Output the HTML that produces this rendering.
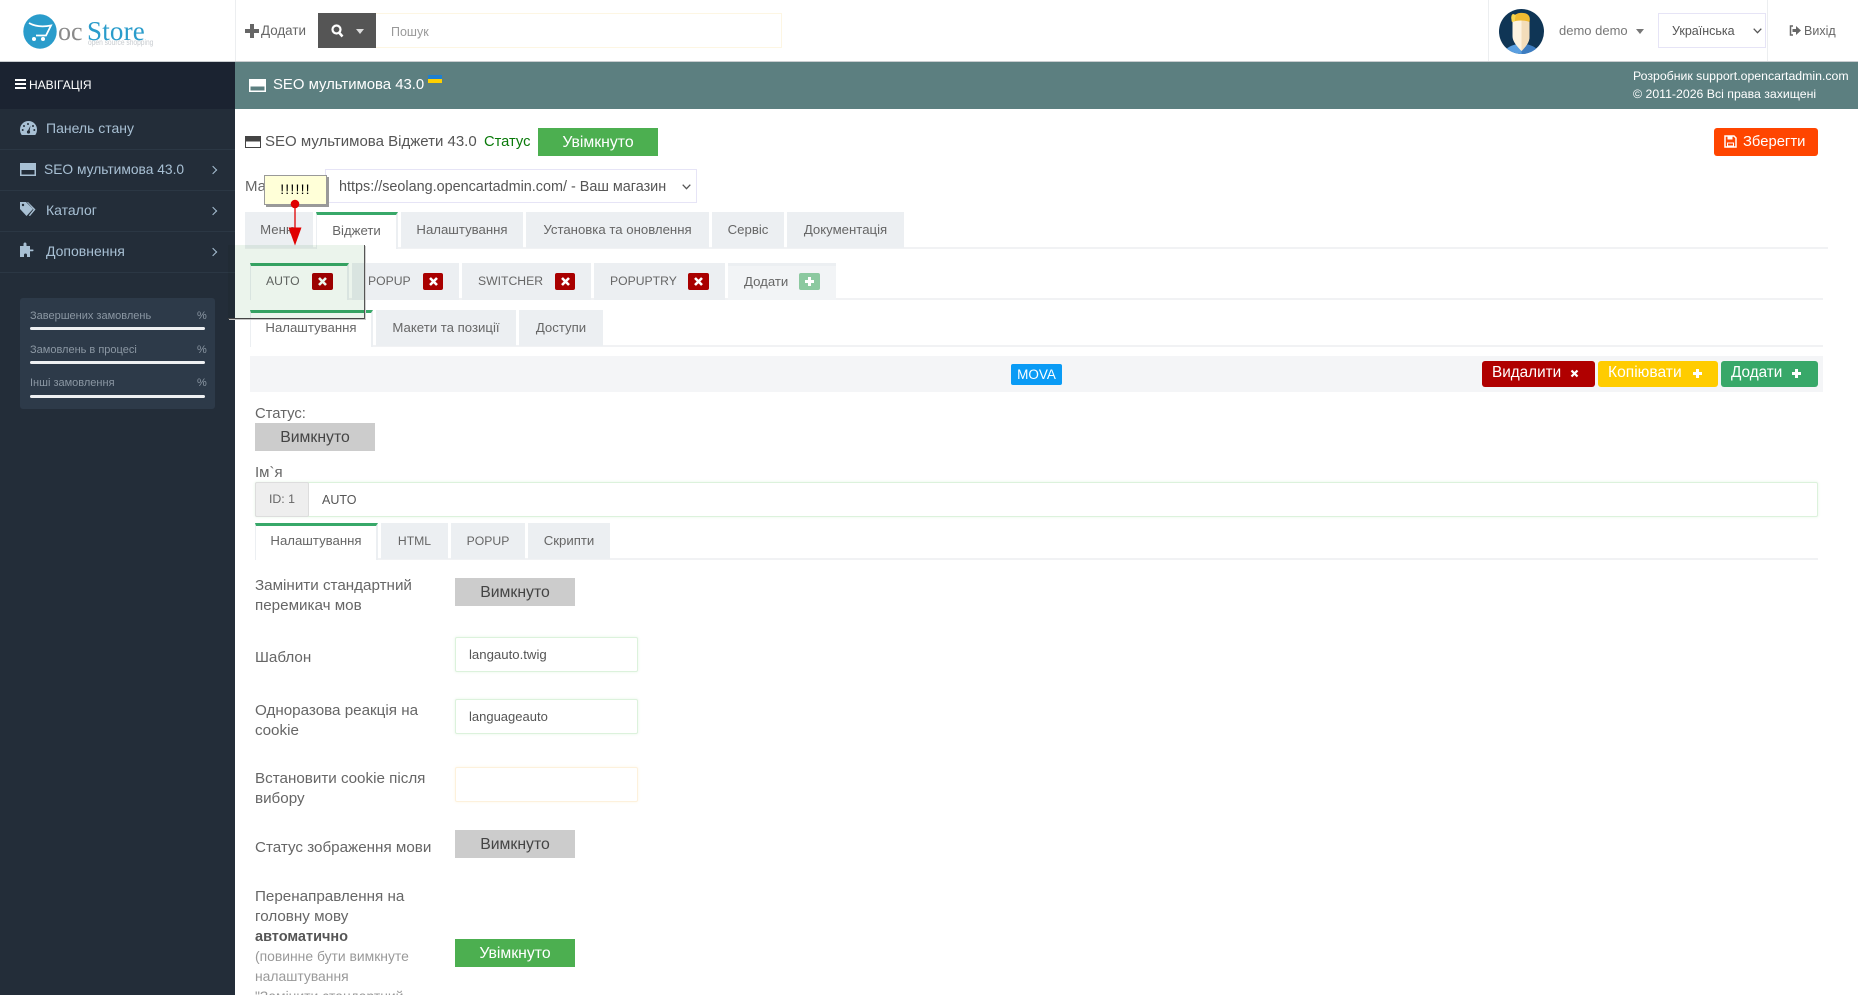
<!DOCTYPE html>
<html lang="uk"><head><meta charset="utf-8"><title>SEO мультимова 43.0</title>
<style>
html,body{margin:0;padding:0;width:1858px;height:995px;overflow:hidden;background:#fff}
body{position:relative;font-family:"Liberation Sans","DejaVu Sans",sans-serif;font-size:13px;color:#666}
.a,.t,svg.i{position:absolute}
.t{white-space:nowrap;line-height:20px;height:20px}
.tab{position:absolute;background:#eceff2;text-align:center;color:#666;white-space:nowrap;font-size:13.2px;line-height:35px;box-sizing:border-box}
.tab.on{background:#fff;border-left:1px solid #eceff2;border-right:2px solid #eceff2;border-top:3px solid #38a869;line-height:30px}
.caps{font-size:12.2px;line-height:36px}
.hl{position:absolute;height:2px;background:#f1f2f4}
.sb{position:absolute;left:0;width:235px;height:1px;background:#2b3744}
.nav{color:#a8c0d4;font-size:14px}
.btn{position:absolute;text-align:center;font-size:15.8px;line-height:29px;height:28px;white-space:nowrap}
.off{background:#ccc;color:#444;width:120px}
.on2{background:#4caf50;color:#fff;width:120px}
.x{position:absolute;width:21px;height:17px;background:#a90000;border-radius:2px}
.r{position:absolute;height:26px;line-height:24px;border-radius:3px;color:#fff;font-size:15.3px;white-space:nowrap}
.inp{position:absolute;box-sizing:border-box;background:#fff;border:1px solid #dcf2dc;box-shadow:0 0 3px #e8f5e8;border-radius:2px;line-height:34px;color:#555;font-size:13.2px;padding-left:13px}
.lb{position:absolute;left:255px;width:190px;font-size:15.2px;line-height:20px;color:#666}
.chev{position:absolute;width:5px;height:5px;border-top:1.3px solid #a8c0d4;border-right:1.3px solid #a8c0d4;transform:rotate(45deg)}
</style></head><body>

<!-- top header -->
<div class="a" style="left:0;top:0;width:1858px;height:61px;background:#fff;border-bottom:1px solid #c9cdd0"></div>
<div class="a" style="left:235px;top:0;width:1px;height:61px;background:#eceef0"></div>
<div class="a" style="left:1488px;top:0;width:1px;height:61px;background:#eceef0"></div>
<div class="a" style="left:1767px;top:0;width:1px;height:61px;background:#eceef0"></div>

<svg class="i" style="left:23px;top:14px" width="34" height="35" viewBox="0 0 34 35"><ellipse cx="17" cy="17.5" rx="16.7" ry="17.2" fill="#2a9ccb"/><path d="M6 9c6 3.500 14 4 22 2.500l-5 10H13" fill="none" stroke="#fff" stroke-width="1.800"/><circle cx="11" cy="25" r="2" fill="#fff"/><circle cx="20" cy="25" r="2" fill="#fff"/></svg>
<div class="t" style="left:58px;top:17px;font:26px/30px 'Liberation Serif',serif;color:#8a8a8a;height:30px">oc</div>
<div class="t" style="left:87px;top:14px;font:27px/34px 'Liberation Serif',serif;color:#2a9ccb;height:34px;letter-spacing:.2px">Store</div>
<div class="t" style="left:88px;top:38px;font-size:8px;line-height:10px;height:10px;color:#c8ccd0;transform:scaleX(.83);transform-origin:left">open source shopping</div>

<svg class="i" style="left:245px;top:24px" width="14" height="14" viewBox="0 0 14 14"><path d="M5 0h4v5h5v4H9v5H5V9H0V5h5z" fill="#666"/></svg>
<div class="t" style="left:261px;top:21px;color:#666;font-size:13.4px">Додати</div>
<div class="a" style="left:318px;top:13px;width:58px;height:35px;background:#555"></div>
<svg class="i" style="left:331px;top:24px" width="13" height="14" viewBox="0 0 13 14"><circle cx="5.500" cy="5.500" r="4" fill="none" stroke="#fff" stroke-width="2.200"/><path d="M8 8.500l3.500 4" stroke="#fff" stroke-width="2.500"/></svg>
<svg class="i" style="left:356px;top:29px" width="8" height="5" viewBox="0 0 8 5"><path d="M0 0h8L4 5z" fill="#ddd"/></svg>
<div class="a" style="left:376px;top:13px;width:406px;height:35px;box-sizing:border-box;border:1px solid #fdf6e3;border-left:0"></div>
<div class="t" style="left:391px;top:22px;color:#999;font-size:12.5px">Пошук</div>

<svg class="i" style="left:1499px;top:9px" width="45" height="45" viewBox="0 0 45 45"><defs><clipPath id="av"><circle cx="22.500" cy="22.500" r="22.500"/></clipPath></defs><g clip-path="url(#av)"><rect width="45" height="45" fill="#0f3555"/><path d="M5 45c1-6 6-9 17.500-10.500C34 36 39 39 40 45z" fill="#5a9fe0"/><path d="M22.500 34.500C34 36 39 39 40 45H22.500z" fill="#3d7cc0"/><path d="M13.500 11h17v16c0 4-1 8-8 15-7-7-9-11-9-15z" fill="#fdf3e0"/><path d="M22.500 11h8v16c0 4-1 8-8 15z" fill="#f3ddba"/><path d="M13 13c-1-4-1-7 1-8l2 1c3-3 12-3 14 1 1 1.500 1 4 .5 6-5-2-12-2-17.500 0z" fill="#f1bb31"/><path d="M13 13c-1-4-1-7 1-8l3 1c-1 2-1 5-1 6z" fill="#f8d64e"/></g></svg>
<div class="t" style="left:1559px;top:21px;font-size:13px;color:#777">demo demo</div>
<svg class="i" style="left:1636px;top:29px" width="8" height="5" viewBox="0 0 8 5"><path d="M0 0h8L4 5z" fill="#777"/></svg>
<div class="a" style="left:1658px;top:13px;width:108px;height:35px;box-sizing:border-box;border:1.5px solid #e6e4f6;background:#fff"></div>
<div class="t" style="left:1672px;top:21px;font-size:12.5px;color:#555">Українська</div>
<svg class="i" style="left:1753px;top:28px" width="9" height="6" viewBox="0 0 9 6"><path d="M.7.7l3.800 4 3.800-4" fill="none" stroke="#555" stroke-width="1.300"/></svg>
<svg class="i" style="left:1789px;top:25px" width="12" height="11" viewBox="0 0 12 11"><path d="M4 1H1.500v9H4" fill="none" stroke="#666" stroke-width="1.500"/><path d="M3.500 4H7V1l5 4.500L7 10V7H3.500z" fill="#666"/></svg>
<div class="t" style="left:1804px;top:21px;font-size:12.500px;color:#666">Вихід</div>

<!-- sidebar -->
<div class="a" style="left:0;top:62px;width:235px;height:933px;background:#232d39"></div>
<div class="a" style="left:0;top:62px;width:235px;height:47px;background:#1b2331"></div>
<svg class="i" style="left:15px;top:79px" width="11" height="10" viewBox="0 0 11 10"><path d="M0 0h11v2H0zM0 4h11v2H0zM0 8h11v2H0z" fill="#fff"/></svg>
<div class="t" style="left:29px;top:75px;font-size:12px;color:#fff">НАВІГАЦІЯ</div>
<div class="sb" style="top:149px"></div><div class="sb" style="top:190px"></div><div class="sb" style="top:231px"></div><div class="sb" style="top:272px"></div>

<svg class="i" style="left:20px;top:121px" width="17" height="14" viewBox="0 0 17 14"><path d="M8.500 0A8.500 8.500 0 0 0 0 8.500C0 10.500.6 12.500 1.700 14h13.600c1.100-1.500 1.700-3.500 1.700-5.500A8.500 8.500 0 0 0 8.500 0z" fill="#a8c0d4"/><g fill="#232d39"><circle cx="4" cy="5" r="1"/><circle cx="8" cy="3" r="1"/><circle cx="2.700" cy="9" r="1"/><circle cx="14.300" cy="9" r="1"/><circle cx="13" cy="5" r="1"/><path d="M10.500 4.500L9.500 10.500 7.500 10.500z"/><circle cx="8.500" cy="11" r="1.600"/></g></svg>
<div class="t nav" style="left:46px;top:118px">Панель стану</div>

<svg class="i" style="left:20px;top:163px" width="16" height="13" viewBox="0 0 16 13"><rect x=".5" y=".5" width="15" height="12" fill="#a8c0d4" stroke="#a8c0d4"/><rect x="1.500" y="7" width="13" height="4.500" fill="#232d39"/></svg>
<div class="t nav" style="left:44px;top:160px;font-size:13.8px">SEO мультимова 43.0</div>
<div class="chev" style="left:210px;top:167px"></div>

<svg class="i" style="left:20px;top:202px" width="17" height="15" viewBox="0 0 17 15"><path d="M0 0h6l7 7-6.500 7L0 7z" fill="#a8c0d4"/><path d="M8 0l7.500 7.500L10 14l-1.200-.5L13.500 7.500 7 0z" fill="#a8c0d4"/><circle cx="3" cy="3" r="1.200" fill="#232d39"/></svg>
<div class="t nav" style="left:46px;top:200px">Каталог</div>
<div class="chev" style="left:210px;top:208px"></div>

<svg class="i" style="left:20px;top:242px" width="15" height="15" viewBox="0 0 15 15"><path d="M0 4h3.500V2.500C3.500 1 4 .5 5 .5s1.500.5 1.500 2V4H10v3.500h1.500c1.500 0 2-.2 2 .8s-.5 1-2 1H10V15H7V13c0-1-.5-1.500-1.500-1.500S4 12 4 13v2H0z" fill="#a8c0d4"/></svg>
<div class="t nav" style="left:46px;top:241px">Доповнення</div>
<div class="chev" style="left:210px;top:249px"></div>

<div class="a" style="left:20px;top:298px;width:195px;height:111px;background:#2d3a49;border-radius:3px"></div>
<div class="t" style="left:30px;top:306px;font-size:11px;color:#8b97a3">Завершених замовлень</div><div class="t" style="left:197px;top:306px;font-size:11px;color:#8b97a3">%</div>
<div class="a" style="left:30px;top:327px;width:175px;height:3px;background:#eef0f2;border-radius:2px"></div>
<div class="t" style="left:30px;top:340px;font-size:11px;color:#8b97a3">Замовлень в процесі</div><div class="t" style="left:197px;top:340px;font-size:11px;color:#8b97a3">%</div>
<div class="a" style="left:30px;top:361px;width:175px;height:3px;background:#eef0f2;border-radius:2px"></div>
<div class="t" style="left:30px;top:373px;font-size:11px;color:#8b97a3">Інші замовлення</div><div class="t" style="left:197px;top:373px;font-size:11px;color:#8b97a3">%</div>
<div class="a" style="left:30px;top:395px;width:175px;height:3px;background:#eef0f2;border-radius:2px"></div>

<!-- page title bar -->
<div class="a" style="left:235px;top:62px;width:1623px;height:47px;background:#5c7f80"></div>
<svg class="i" style="left:249px;top:79px" width="17" height="13" viewBox="0 0 17 13"><rect x=".5" y=".5" width="16" height="12" fill="#fff" stroke="#fff"/><rect x="1.500" y="7.500" width="14" height="4" fill="#5c7f80"/></svg>
<div class="t" style="left:273px;top:75px;color:#fff;font-size:14.9px">SEO мультимова 43.0</div>
<div class="a" style="left:428px;top:75px;width:14px;height:4px;background:#1f7fd0"></div>
<div class="a" style="left:428px;top:79px;width:14px;height:4px;background:#ffd000"></div>
<div class="t" style="left:1633px;top:66px;color:#fff;font-size:12.3px">Розробник support.opencartadmin.com</div>
<div class="t" style="left:1633px;top:84px;color:#fff;font-size:12.3px">© 2011-2026 Всі права захищені</div>

<!-- title row -->
<svg class="i" style="left:245px;top:136px" width="16" height="12" viewBox="0 0 16 12"><rect x=".5" y=".5" width="15" height="11" fill="#fff" stroke="#444"/><rect x="1" y="1" width="14" height="4.500" fill="#444"/></svg>
<div class="t" style="left:265px;top:132px;font-size:15px;color:#555">SEO мультимова Віджети 43.0</div>
<div class="t" style="left:484px;top:132px;font-size:14.7px;color:#0a7a0a">Статус</div>
<div class="btn on2" style="left:538px;top:128px">Увімкнуто</div>
<div class="a" style="left:1714px;top:128px;width:104px;height:28px;background:#ff4500;border-radius:3px"></div>
<svg class="i" style="left:1724px;top:135px" width="13" height="13" viewBox="0 0 13 13"><path d="M1 1h9l2 2v9H1z" fill="none" stroke="#fff" stroke-width="1.500"/><rect x="3.500" y="1" width="5" height="3.500" fill="#fff"/><rect x="3.500" y="8" width="6" height="3" fill="none" stroke="#fff"/></svg>
<div class="t" style="left:1743px;top:132px;color:#fff;font-size:14.8px">Зберегти</div>

<!-- store select -->
<div class="t" style="left:245px;top:177px;font-size:15px;color:#666">Магазин</div>
<div class="a" style="left:325px;top:169px;width:372px;height:34px;box-sizing:border-box;border:1.5px solid #e6e4f6;background:#fff"></div>
<div class="t" style="left:339px;top:177px;font-size:14.4px;color:#555">https://seolang.opencartadmin.com/ - Ваш магазин</div>
<svg class="i" style="left:682px;top:184px" width="9" height="6" viewBox="0 0 9 6"><path d="M.7.7l3.800 4 3.800-4" fill="none" stroke="#555" stroke-width="1.300"/></svg>

<!-- level-1 tabs -->
<div class="hl" style="left:245px;top:247px;width:1583px"></div>
<div class="tab" style="left:245px;top:212px;width:68px;height:36px;padding-right:2px">Меню</div>
<div class="tab on" style="left:316px;top:212px;width:82px;height:37px;line-height:31px">Віджети</div>
<div class="tab" style="left:401px;top:212px;width:122px;height:36px">Налаштування</div>
<div class="tab" style="left:526px;top:212px;width:183px;height:36px">Установка та оновлення</div>
<div class="tab" style="left:712px;top:212px;width:72px;height:36px">Сервіс</div>
<div class="tab" style="left:787px;top:212px;width:117px;height:36px">Документація</div>

<!-- level-2 tabs -->
<div class="hl" style="left:250px;top:298px;width:1573px"></div>
<div class="tab on caps" style="left:250px;top:263px;width:99px;height:37px;text-align:left;padding-left:15px;line-height:31px">AUTO</div>
<div class="tab caps" style="left:352px;top:263px;width:107px;height:37px;text-align:left;padding-left:16px">POPUP</div>
<div class="tab caps" style="left:462px;top:263px;width:129px;height:37px;text-align:left;padding-left:16px">SWITCHER</div>
<div class="tab caps" style="left:594px;top:263px;width:131px;height:37px;text-align:left;padding-left:16px">POPUPTRY</div>
<div class="tab" style="left:728px;top:263px;width:108px;height:37px;text-align:left;padding-left:16px;background:#f2f4f6;border-top:3px solid #eceff2;line-height:31px">Додати</div>
<div class="x" style="left:312px;top:273px"></div><div class="x" style="left:423px;top:273px;width:20px"></div><div class="x" style="left:555px;top:273px;width:20px"></div><div class="x" style="left:688px;top:273px"></div>
<div class="a" style="left:799px;top:273px;width:21px;height:17px;background:#8cc9a0;border-radius:2px"></div>
<svg class="i" style="left:317px;top:276px" width="11" height="11" viewBox="0 0 11 11"><path d="M2 2l7 7M9 2l-7 7" stroke="#fff" stroke-width="2.600"/></svg>
<svg class="i" style="left:428px;top:276px" width="11" height="11" viewBox="0 0 11 11"><path d="M2 2l7 7M9 2l-7 7" stroke="#fff" stroke-width="2.600"/></svg>
<svg class="i" style="left:560px;top:276px" width="11" height="11" viewBox="0 0 11 11"><path d="M2 2l7 7M9 2l-7 7" stroke="#fff" stroke-width="2.600"/></svg>
<svg class="i" style="left:693px;top:276px" width="11" height="11" viewBox="0 0 11 11"><path d="M2 2l7 7M9 2l-7 7" stroke="#fff" stroke-width="2.600"/></svg>
<svg class="i" style="left:804px;top:276px" width="11" height="11" viewBox="0 0 11 11"><path d="M4 1h3v3h3v3H7v3H4V7H1V4h3z" fill="#fff"/></svg>

<!-- level-3 tabs -->
<div class="hl" style="left:250px;top:345px;width:1573px"></div>
<div class="tab on" style="left:250px;top:310px;width:123px;height:37px">Налаштування</div>
<div class="tab" style="left:376px;top:310px;width:140px;height:36px">Макети та позиції</div>
<div class="tab" style="left:519px;top:310px;width:84px;height:36px">Доступи</div>

<!-- MOVA bar -->
<div class="a" style="left:250px;top:356px;width:1573px;height:36px;background:#f4f5f7"></div>
<div class="a" style="left:1011px;top:364px;width:51px;height:21px;background:#0a9bf5;border-radius:2px;color:#fff;text-align:center;line-height:21px;font-size:13.500px">MOVA</div>
<div class="r" style="left:1482px;top:361px;width:113px;background:#b00000;padding-left:10px;box-sizing:border-box">Видалити</div>
<svg class="i" style="left:1569px;top:368px" width="11" height="11" viewBox="0 0 11 11"><path d="M2.500 2.500l6 6M8.500 2.500l-6 6" stroke="#fff" stroke-width="2.200"/></svg>
<div class="r" style="left:1598px;top:361px;width:120px;background:#ffcc00;padding-left:10px;box-sizing:border-box;font-size:15.6px">Копіювати</div>
<svg class="i" style="left:1692px;top:368px" width="11" height="11" viewBox="0 0 11 11"><path d="M4 1h3v3h3v3H7v3H4V7H1V4h3z" fill="#fff"/></svg>
<div class="r" style="left:1721px;top:361px;width:97px;background:#38a869;padding-left:10px;box-sizing:border-box">Додати</div>
<svg class="i" style="left:1791px;top:368px" width="11" height="11" viewBox="0 0 11 11"><path d="M4 1h3v3h3v3H7v3H4V7H1V4h3z" fill="#fff"/></svg>

<!-- status & name -->
<div class="t" style="left:255px;top:404px;font-size:14.8px;color:#666">Статус:</div>
<div class="btn off" style="left:255px;top:423px">Вимкнуто</div>
<div class="t" style="left:255px;top:463px;font-size:15px;color:#666">Ім`я</div>
<div class="inp" style="left:255px;top:482px;width:1563px;height:35px;padding-left:66px;font-size:12.5px">AUTO</div>
<div class="a" style="left:255px;top:482px;width:54px;height:35px;box-sizing:border-box;background:#eee;border:1px solid #ddd;border-radius:2px;text-align:center;line-height:33px;color:#666;font-size:12.3px">ID: 1</div>

<!-- level-4 tabs -->
<div class="hl" style="left:255px;top:558px;width:1563px"></div>
<div class="tab on" style="left:255px;top:523px;width:123px;height:37px">Налаштування</div>
<div class="tab caps" style="left:381px;top:523px;width:67px;height:36px">HTML</div>
<div class="tab caps" style="left:451px;top:523px;width:74px;height:36px">POPUP</div>
<div class="tab" style="left:528px;top:523px;width:82px;height:36px">Скрипти</div>

<!-- form -->
<div class="lb" style="top:576px">Замінити стандартний<br>перемикач мов</div>
<div class="btn off" style="left:455px;top:578px">Вимкнуто</div>
<div class="lb" style="top:648px">Шаблон</div>
<div class="inp" style="left:455px;top:637px;width:183px;height:35px">langauto.twig</div>
<div class="lb" style="top:701px">Одноразова реакція на<br>cookie</div>
<div class="inp" style="left:455px;top:699px;width:183px;height:35px;font-size:13px">languageauto</div>
<div class="lb" style="top:769px">Встановити cookie після<br>вибору</div>
<div class="inp" style="left:455px;top:767px;width:183px;height:35px;border-color:#fdf1dc;box-shadow:0 0 3px #fdf6e8"></div>
<div class="lb" style="top:838px">Статус зображення мови</div>
<div class="btn off" style="left:455px;top:830px">Вимкнуто</div>
<div class="lb" style="top:887px">Перенаправлення на<br>головну мову<br><b style="color:#555;font-size:14.5px">автоматично</b></div>
<div class="lb" style="top:946px;color:#999;font-size:13.9px;line-height:20px">(повинне бути вимкнуте<br>налаштування<br>"Замінити стандартний</div>
<div class="btn on2" style="left:455px;top:939px">Увімкнуто</div>

<!-- highlight overlay and tooltip -->
<div class="a" style="left:228px;top:245px;width:136px;height:73px;background:#ebf4ec;mix-blend-mode:multiply"></div>
<div class="a" style="left:228px;top:317.5px;width:136.5px;height:1px;background:#444"></div>
<div class="a" style="left:364px;top:245px;width:1px;height:73.5px;background:#555"></div>
<div class="a" style="left:229px;top:318.5px;width:137px;height:1px;background:#c4c4c4"></div>
<div class="a" style="left:365px;top:246px;width:1px;height:73px;background:#d0d0d0"></div>
<div class="a" style="left:264px;top:175px;width:63px;height:30px;box-sizing:border-box;background:#ffffd8;border:1px solid #999;box-shadow:2px 2px 0 #999;text-align:center;line-height:27px;color:#000;font-size:14px;letter-spacing:1.2px">!!!!!!</div>
<svg class="i" style="left:285px;top:198px" width="20" height="50" viewBox="0 0 20 50"><path d="M10 6v30" stroke="#e00000" stroke-width="1.300"/><circle cx="10" cy="6" r="4.300" fill="#e00000"/><path d="M3.500 29.500h13L10 47.500z" fill="#e00000"/></svg>
</body></html>
